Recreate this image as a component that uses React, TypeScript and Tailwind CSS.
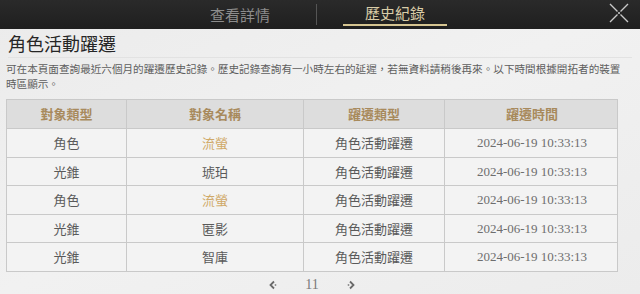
const ROWS = [
  { type: "角色", name: "流螢", gold: true, kind: "角色活動躍遷", time: "2024-06-19 10:33:13" },
  { type: "光錐", name: "琥珀", gold: false, kind: "角色活動躍遷", time: "2024-06-19 10:33:13" },
  { type: "角色", name: "流螢", gold: true, kind: "角色活動躍遷", time: "2024-06-19 10:33:13" },
  { type: "光錐", name: "匿影", gold: false, kind: "角色活動躍遷", time: "2024-06-19 10:33:13" },
  { type: "光錐", name: "智庫", gold: false, kind: "角色活動躍遷", time: "2024-06-19 10:33:13" },
] as const;

const HEADERS = ["對象類型", "對象名稱", "躍遷類型", "躍遷時間"] as const;

const COLS = "grid grid-cols-[119px_177px_141px_175px]";

export default function App() {
  return (
    <div
      className="flex h-[294px] w-[640px] flex-col overflow-hidden bg-gradient-to-br from-[#ebebeb] via-[#f1f1f1] to-[#ececec]"
      style={{ fontFamily: '"Noto Sans CJK TC", "Noto Sans", sans-serif' }}
    >
      <TopBar />

      <div className="mx-[8px] flex h-[29px] items-center border-b border-[#e2e2e2] pb-[1px]">
        <h1 className="text-[18px] leading-none text-[#262626]">角色活動躍遷</h1>
      </div>

      <p className="mt-[3px] w-[630px] px-[6px] text-[10.6px] leading-[15px] text-[#5e5e5e]">
        可在本頁面查詢最近六個月的躍遷歷史記錄。歷史記錄查詢有一小時左右的延遲，若無資料請稍後再來。以下時間根據開拓者的裝置時區顯示。
      </p>

      <div className="mx-[6px] mt-[8px] w-[612px] border border-[#c9c9c9]">
        <div className={`${COLS} h-[28px] bg-[#dddddd]`}>
          {HEADERS.map((h, i) => (
            <div
              key={h}
              className={`flex items-center justify-center text-[13px] font-bold text-[#a88a5c] ${i > 0 ? "border-l border-[#c9c9c9]" : ""}`}
            >
              {h}
            </div>
          ))}
        </div>
        {ROWS.map((row, idx) => (
          <div key={idx} className={`${COLS} h-[28.6px] border-t border-[#c9c9c9] bg-[#f3f3f3] text-[13px] text-[#5a5a5a]`}>
            <div className="flex items-center justify-center">{row.type}</div>
            <div className={`flex items-center justify-center border-l border-[#c9c9c9] ${row.gold ? "text-[#d0a968]" : ""}`}>
              {row.name}
            </div>
            <div className="flex items-center justify-center border-l border-[#c9c9c9]">{row.kind}</div>
            <div
              className="flex items-center justify-center border-l border-[#c9c9c9] text-[13px] text-[#6e6e6e]"
              style={{ fontFamily: '"Liberation Serif", serif' }}
            >
              {row.time}
            </div>
          </div>
        ))}
      </div>

      <div className="mt-[6px] flex items-center justify-center gap-[27px] pr-[16px] text-[#7a7a7a]">
        <Chevron dir="left" />
        <span className="text-[14px] leading-none" style={{ fontFamily: '"Liberation Serif", serif' }}>
          11
        </span>
        <Chevron dir="right" />
      </div>
    </div>
  );
}

function TopBar() {
  return (
    <div className="relative flex h-[29px] shrink-0 items-stretch bg-gradient-to-b from-[#2a2a2a] to-[#1f1f1f]">
      <div className="flex w-[316px] items-center justify-end pr-[46px]">
        <span className="text-[15px] leading-none text-[#8c8c8c]">查看詳情</span>
      </div>
      <div className="my-[4px] w-px bg-[#555]" />
      <div className="ml-[26px] flex w-[104px] flex-col items-center">
        <span className="mt-[4px] text-[15px] leading-[17px] text-[#d9cca7]">歷史紀錄</span>
        <div className="mt-auto mb-[3px] h-[2px] w-full bg-[#d6c591]" />
      </div>
      <svg className="absolute right-[11px] top-[3px]" width="20" height="20" viewBox="0 0 20 20">
        <path d="M1 1 L8.5 8.5 M11.5 11.5 L19 19 M19 1 L11.5 8.5 M8.5 11.5 L1 19" stroke="#c9c9c9" strokeWidth="1.4" />
        <circle cx="10" cy="10" r="1" fill="#d0d0d0" />
      </svg>
    </div>
  );
}

function Chevron({ dir }: { dir: "left" | "right" }) {
  return (
    <svg width="10" height="10" viewBox="0 0 10 10">
      {dir === "left" ? (
        <>
          <path d="M6 1.5 L2.5 5 L6 8.5" stroke="#6a6a6a" strokeWidth="1.8" fill="none" />
          <circle cx="7.5" cy="5" r="0.9" fill="#8a8a8a" />
        </>
      ) : (
        <>
          <path d="M4 1.5 L7.5 5 L4 8.5" stroke="#6a6a6a" strokeWidth="1.8" fill="none" />
          <circle cx="2.5" cy="5" r="0.9" fill="#8a8a8a" />
        </>
      )}
    </svg>
  );
}
